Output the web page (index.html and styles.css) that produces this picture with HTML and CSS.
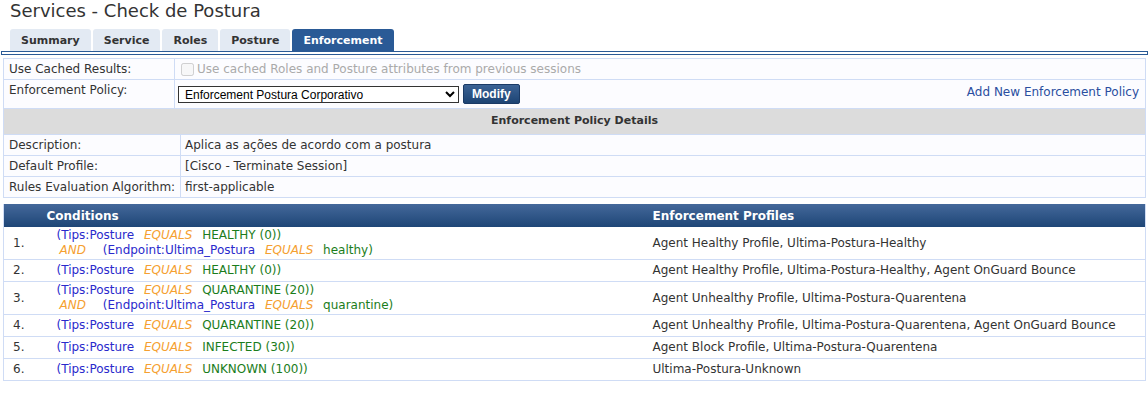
FILE: index.html
```html
<!DOCTYPE html>
<html lang="pt">
<head>
    <meta charset="UTF-8">
    <title>Services - Check de Postura</title>
    <link rel="stylesheet" href="styles.css">
</head>
<body>
    <h1 class="page-title">Services - Check de Postura</h1>

    <ul class="tabs">
        <li class="tab">Summary</li>
        <li class="tab">Service</li>
        <li class="tab">Roles</li>
        <li class="tab">Posture</li>
        <li class="tab active">Enforcement</li>
    </ul>
    <div class="tab-rule"></div>

    <table class="form-table">
        <tr class="row-cached">
            <td class="label">Use Cached Results:</td>
            <td class="value muted" colspan="2">
                <label class="check"><input type="checkbox" disabled> Use cached Roles and Posture attributes from previous sessions</label>
            </td>
        </tr>
        <tr class="row-policy">
            <td class="label">Enforcement Policy:</td>
            <td class="value">
                <select class="policy-select">
                    <option>Enforcement Postura Corporativo</option>
                </select><button class="btn-modify">Modify</button>
            </td>
            <td class="value link-cell"><a href="#" class="add-link">Add New Enforcement Policy</a></td>
        </tr>
    </table>

    <div class="section-head">Enforcement Policy Details</div>

    <table class="form-table details">
        <tr>
            <td class="label">Description:</td>
            <td class="value">Aplica as ações de acordo com a postura</td>
        </tr>
        <tr>
            <td class="label">Default Profile:</td>
            <td class="value">[Cisco - Terminate Session]</td>
        </tr>
        <tr>
            <td class="label">Rules Evaluation Algorithm:</td>
            <td class="value">first-applicable</td>
        </tr>
    </table>

    <table class="rules">
        <colgroup>
            <col class="col-num">
            <col class="col-cond">
            <col>
        </colgroup>
        <thead>
            <tr>
                <th class="num"></th>
                <th class="cond">Conditions</th>
                <th class="prof">Enforcement Profiles</th>
            </tr>
        </thead>
        <tbody>
            <tr>
                <td class="num">1.</td>
                <td class="cond">
                    <div><span class="attr">(Tips:Posture</span> <span class="op">EQUALS</span> <span class="val">HEALTHY (0))</span></div>
                    <div><span class="op and">AND</span> <span class="attr">(Endpoint:Ultima_Postura</span> <span class="op">EQUALS</span> <span class="val">healthy)</span></div>
                </td>
                <td class="prof">Agent Healthy Profile, Ultima-Postura-Healthy</td>
            </tr>
            <tr>
                <td class="num">2.</td>
                <td class="cond"><span class="attr">(Tips:Posture</span> <span class="op">EQUALS</span> <span class="val">HEALTHY (0))</span></td>
                <td class="prof">Agent Healthy Profile, Ultima-Postura-Healthy, Agent OnGuard Bounce</td>
            </tr>
            <tr>
                <td class="num">3.</td>
                <td class="cond">
                    <div><span class="attr">(Tips:Posture</span> <span class="op">EQUALS</span> <span class="val">QUARANTINE (20))</span></div>
                    <div><span class="op and">AND</span> <span class="attr">(Endpoint:Ultima_Postura</span> <span class="op">EQUALS</span> <span class="val">quarantine)</span></div>
                </td>
                <td class="prof">Agent Unhealthy Profile, Ultima-Postura-Quarentena</td>
            </tr>
            <tr>
                <td class="num">4.</td>
                <td class="cond"><span class="attr">(Tips:Posture</span> <span class="op">EQUALS</span> <span class="val">QUARANTINE (20))</span></td>
                <td class="prof">Agent Unhealthy Profile, Ultima-Postura-Quarentena, Agent OnGuard Bounce</td>
            </tr>
            <tr>
                <td class="num">5.</td>
                <td class="cond"><span class="attr">(Tips:Posture</span> <span class="op">EQUALS</span> <span class="val">INFECTED (30))</span></td>
                <td class="prof">Agent Block Profile, Ultima-Postura-Quarentena</td>
            </tr>
            <tr>
                <td class="num">6.</td>
                <td class="cond"><span class="attr">(Tips:Posture</span> <span class="op">EQUALS</span> <span class="val">UNKNOWN (100))</span></td>
                <td class="prof">Ultima-Postura-Unknown</td>
            </tr>
        </tbody>
    </table>
</body>
</html>
```

FILE: styles.css
```css
body {
    font-family: "DejaVu Sans", Verdana, sans-serif;
    font-size: 12px;
    color: #333;
    margin: 0;
    padding: 0 2px 0 3px;
    background: #fff;
}
.page-title {
    font-size: 18px;
    font-weight: normal;
    color: #333;
    margin: 0 0 0 7px;
    height: 29px;
    line-height: 22px;
}
.tabs {
    list-style: none;
    margin: 0 0 0 7px;
    padding: 0;
    display: flex;
    gap: 2px;
}
.tab {
    background: #e3eaf3;
    color: #333;
    font-weight: bold;
    font-size: 11px;
    height: 22px;
    line-height: 23px;
    padding: 0 11px;
    border-radius: 3px 3px 0 0;
}
.tab.active {
    background: #2a5a96;
    color: white;
}
.tab-rule {
    height: 2px;
    border: 1px solid #2a5a96;
    margin: 0 -2px 3px -2px;
}
.form-table {
    width: 100%;
    border-collapse: collapse;
    border: 1px solid #cfdcf5;
    background: #fcfcff;
}
.form-table td {
    border: 1px solid #cfdcf5;
    padding: 0 5px;
    vertical-align: top;
}
.form-table .label {
    width: 160px;
}
.row-cached td {
    height: 20px;
    line-height: 20px;
}
.row-policy td {
    height: 28px;
    line-height: 20px;
}
.form-table .link-cell {
    border-left: none;
    text-align: right;
}
.row-policy .value:not(.link-cell) {
    border-right: none;
    width: 400px;
    padding-left: 3px;
}
.muted {
    color: #aaa;
}
.check {
    display: flex;
    align-items: center;
    gap: 3px;
}
.check input {
    margin: 0 0 0 1px;
    width: 13px;
    height: 13px;
}
.policy-select {
    font-family: "Liberation Sans", Arial, sans-serif;
    font-size: 12px;
    width: 281px;
    height: 17px;
    border: 1px solid #333;
    border-radius: 0;
    padding: 0 2px;
    margin: 6px 0 0 0;
    background: white;
    color: black;
    vertical-align: top;
}
.btn-modify {
    font-family: "Liberation Sans", Arial, sans-serif;
    font-weight: bold;
    font-size: 12px;
    color: white;
    background: linear-gradient(#3b6294, #1d4474);
    border: 1px solid #1a3a66;
    border-radius: 2px;
    height: 20px;
    padding: 0 8px;
    margin: 4px 0 0 4px;
    vertical-align: top;
}
.add-link {
    color: #2a4ea0;
    text-decoration: none;
    display: inline-block;
    padding-top: 2px;
    padding-right: 1px;
}
.section-head {
    background: #dcdcdc;
    font-weight: bold;
    font-size: 11px;
    text-align: center;
    height: 25px;
    line-height: 24px;
    border-left: 1px solid #cfdcf5;
    border-right: 1px solid #cfdcf5;
}
.details td {
    height: 20px;
    line-height: 20px;
}
.details .label {
    width: 170px;
    padding-right: 1px;
}
.details .value {
    padding-left: 4px;
}
.rules {
    width: 100%;
    table-layout: fixed;
    border-collapse: collapse;
    margin-top: 6px;
    border-left: 1px solid #cfdcf5;
    border-right: 1px solid #cfdcf5;
}
.col-num {
    width: 43px;
}
.col-cond {
    width: 606px;
}
.rules th {
    background: linear-gradient(#44689a, #1e4677);
    color: white;
    text-align: left;
    font-size: 12px;
    height: 23px;
    padding: 0;
}
.rules td {
    border-bottom: 1px solid #cfdcf5;
    height: 22px;
    line-height: 15px;
    padding: 1px 0;
    vertical-align: middle;
    box-sizing: border-box;
}
.rules td.num {
    padding-left: 9px;
}
.rules td.cond {
    padding-left: 10px;
}
.rules .prof {
    padding-left: 0;
}
.attr {
    color: #2a2acc;
}
.op {
    color: #f5a030;
    font-style: italic;
    margin: 0 6px;
}
.op.and {
    margin: 0 13px 0 3px;
}
.val {
    color: #1b7d1b;
}
```
